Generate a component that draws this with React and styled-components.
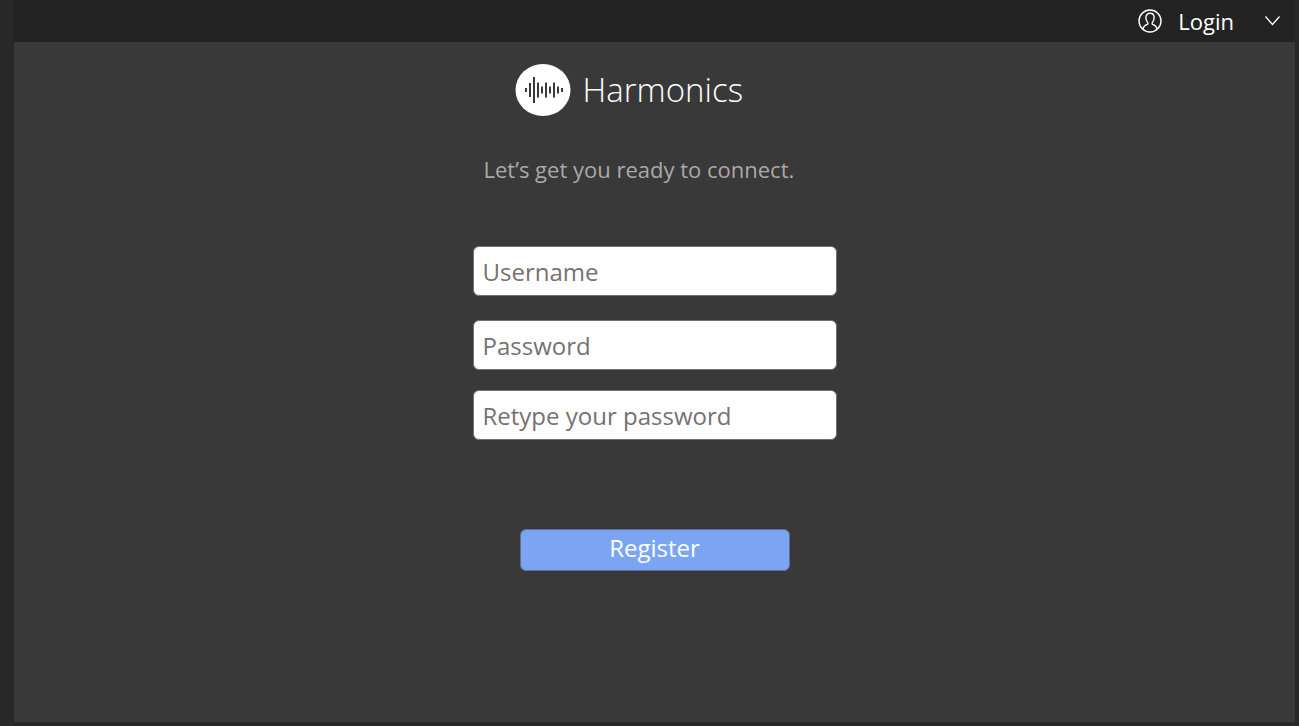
import React from 'react';
import styled, { createGlobalStyle } from 'styled-components';

const GlobalStyle = createGlobalStyle`
  *, *::before, *::after { box-sizing: border-box; }
  body {
    margin: 0;
    background: #282828;
    font-family: "Open Sans", "Noto Sans", sans-serif;
  }
`;

const Page = styled.div`
  min-height: 100vh;
  padding: 0 4px 4px 14px;
  display: flex;
  flex-direction: column;
`;

const TopBar = styled.header`
  height: 42px;
  padding: 0 14px 0 24px;
  display: flex;
  align-items: center;
  justify-content: flex-end;
  background: #232323;
`;

const LoginLink = styled.a`
  display: flex;
  align-items: center;
  gap: 16px;
  color: #fff;
  font-size: 22px;
  line-height: 30px;
  font-weight: 500;
  text-decoration: none;
`;

const MenuButton = styled.button`
  display: flex;
  margin-left: 30px;
  padding: 0;
  border: 0;
  background: none;
  color: #fff;
  cursor: pointer;
`;

const Main = styled.main`
  flex: 1;
  padding: 22px 16px;
  display: flex;
  justify-content: center;
  background: #393939;
`;

const Column = styled.div`
  width: 100%;
  max-width: 364px;
`;

const Brand = styled.div`
  display: flex;
  align-items: center;
  gap: 12px;
  padding-left: 42px;
  color: #fff;
`;

const BrandName = styled.h1`
  margin: 0;
  font-size: 33px;
  line-height: 52px;
  font-weight: 300;
`;

const Tagline = styled.p`
  margin: 36px 0 0;
  padding-left: 11px;
  color: #aca8a8;
  font-size: 22px;
  line-height: 34px;
  white-space: nowrap;
`;

const Form = styled.form`
  margin-top: 60px;
  display: flex;
  flex-direction: column;
  gap: 24px;
`;

const PasswordGroup = styled.div`
  display: flex;
  flex-direction: column;
  gap: 20px;
`;

const Field = styled.input`
  width: 100%;
  height: 50px;
  padding: 0 9px;
  border: 1px solid #767171;
  border-radius: 6px;
  background: #fff;
  color: #767171;
  font-family: inherit;
  font-size: 24px;
  &::placeholder { color: #767171; opacity: 1; }
`;

const RegisterButton = styled.button`
  align-self: center;
  width: 270px;
  height: 42px;
  margin-top: 65px;
  padding: 0 0 4px;
  border: 1px solid #5d7196;
  border-radius: 6px;
  background: #7ba5f2;
  color: #fff;
  font-family: inherit;
  font-size: 24px;
  line-height: 34px;
  cursor: pointer;
`;

const BARS = [
  [11, 4], [15, 14], [19, 26], [23, 15], [27, 7],
  [31, 15], [35, 7], [39, 15], [43, 7], [47, 4],
];

function Logo() {
  return (
    <svg width="56" height="52" viewBox="0 0 56 52" aria-hidden="true">
      <ellipse cx="28" cy="26" rx="27.5" ry="26" fill="#fff" />
      {BARS.map(([x, h]) => (
        <line key={x} x1={x} x2={x} y1={26 - h / 2} y2={26 + h / 2}
          stroke="#393939" strokeWidth="2" />
      ))}
    </svg>
  );
}

function UserIcon() {
  return (
    <svg width="24" height="24" viewBox="0 0 24 24" fill="none" stroke="currentColor" strokeWidth="1.4" aria-hidden="true">
      <circle cx="12" cy="12" r="11" />
      <path d="M4.8 20C5.4 17.4 7 16.2 9.4 15.4C10 15.1 10 14.1 9.5 13.4C8.5 12.2 7.9 10.4 7.9 8.6C7.9 5.9 9.5 4.3 12 4.3C14.5 4.3 16.1 5.9 16.1 8.6C16.1 10.4 15.5 12.2 14.5 13.4C14 14.1 14 15.1 14.6 15.4C17 16.2 18.6 17.4 19.2 20" />
    </svg>
  );
}

function Chevron() {
  return (
    <svg width="17" height="12" viewBox="0 0 17 12" fill="none" stroke="currentColor" strokeWidth="1.3" aria-hidden="true">
      <path d="M1.5 1.5L8.5 9.5L15.5 1.5" />
    </svg>
  );
}

export default function App() {
  return (
    <>
      <GlobalStyle />
      <Page>
        <TopBar>
          <LoginLink href="#login"><UserIcon />Login</LoginLink>
          <MenuButton type="button" aria-label="Open menu"><Chevron /></MenuButton>
        </TopBar>
        <Main>
          <Column>
            <Brand><Logo /><BrandName>Harmonics</BrandName></Brand>
            <Tagline>Let’s get you ready to connect.</Tagline>
            <Form onSubmit={(event) => event.preventDefault()}>
              <Field type="text" name="username" placeholder="Username" aria-label="Username" />
              <PasswordGroup>
                <Field type="password" name="password" placeholder="Password" aria-label="Password" />
                <Field type="password" name="confirm" placeholder="Retype your password" aria-label="Retype your password" />
              </PasswordGroup>
              <RegisterButton type="submit">Register</RegisterButton>
            </Form>
          </Column>
        </Main>
      </Page>
    </>
  );
}
